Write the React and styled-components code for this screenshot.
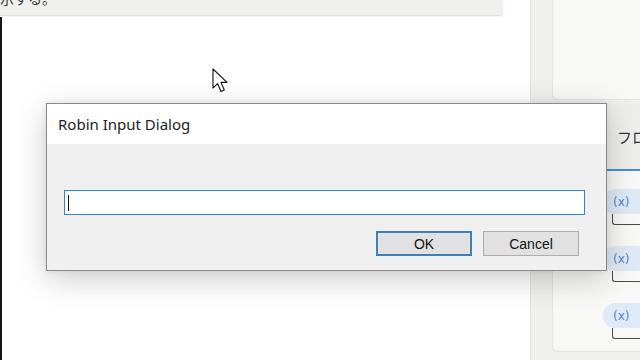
import styled, { createGlobalStyle } from "styled-components";

const Global = createGlobalStyle`
  html, body { margin: 0; padding: 0; background: #ffffff; }
  body { font-family: "Noto Sans", "Noto Sans CJK JP", sans-serif; }
`;

const items = [0, 1, 2];

export default function App() {
  return (
    <>
      <Global />
      <Screen>
        <MainColumn>
          <TopPanel>
            <TopText>示する。</TopText>
          </TopPanel>
          <Canvas />
        </MainColumn>

        <SidePane>
          <UpperCard />
          <VarCard>
            <VarHeader>
              <VarTab>フロー変数</VarTab>
            </VarHeader>
            <VarList>
              {items.map((i) => (
                <VarItem key={i}>
                  <VarChip>(x)</VarChip>
                  <VarBox />
                </VarItem>
              ))}
            </VarList>
          </VarCard>
        </SidePane>

        <Cursor width="18" height="27" viewBox="0 0 18 27">
          <path
            d="M1 1 L1 20 L5.6 15.6 L9 23.5 L12.3 22 L9 14.4 L15 14.4 Z"
            fill="#ffffff"
            stroke="#111"
            strokeWidth="1.1"
            strokeLinejoin="round"
          />
        </Cursor>

        <Dialog>
          <TitleBar>Robin Input Dialog</TitleBar>
          <DialogBody>
            <TextBox>
              <Caret />
            </TextBox>
            <ButtonRow>
              <DlgButton primary>OK</DlgButton>
              <DlgButton>Cancel</DlgButton>
            </ButtonRow>
          </DialogBody>
        </Dialog>
      </Screen>
    </>
  );
}

const Screen = styled.div`
  position: relative;
  width: 640px;
  height: 360px;
  overflow: hidden;
  display: flex;
  background: #ffffff;
`;

const MainColumn = styled.div`
  width: 530px;
  flex-shrink: 0;
  display: flex;
  flex-direction: column;
  background: #ffffff;
`;

const TopPanel = styled.div`
  width: 503px;
  height: 15px;
  background: #f0f0ee;
  border-bottom: 1px solid #e2e2df;
  border-bottom-right-radius: 3px;
  box-shadow: 0 2px 4px rgba(0, 0, 0, 0.05);
  overflow: hidden;
  display: flex;
  align-items: flex-end;
`;

const TopText = styled.div`
  font-size: 14px;
  line-height: 14px;
  color: #3a3a3a;
  margin-bottom: 9px;
  white-space: nowrap;
`;

const Canvas = styled.div`
  flex: 1;
  margin-top: 1px;
  border-left: 2px solid #151515;
  background: #ffffff;
`;

const SidePane = styled.div`
  flex: 1;
  min-width: 0;
  display: flex;
  flex-direction: column;
  gap: 4px;
  padding-left: 21px;
  background: #efefed;
  border-left: 1px solid #e4e4e2;
`;

const UpperCard = styled.div`
  height: 99px;
  background: #f8f8f6;
  border-left: 1px solid #e2e2e0;
  border-bottom: 1px solid #e2e2e0;
  border-bottom-left-radius: 6px;
`;

const VarCard = styled.div`
  height: 247px;
  background: #f8f8f6;
  border-left: 1px solid #e2e2e0;
  border-bottom: 1px solid #e2e2e0;
  border-top-left-radius: 6px;
  border-bottom-left-radius: 6px;
  display: flex;
  flex-direction: column;
  overflow: hidden;
`;

const VarHeader = styled.div`
  height: 67px;
  padding-left: 54px;
  background: #ededec;
  display: flex;
  align-items: stretch;
`;

const VarTab = styled.div`
  flex: 1;
  min-width: 0;
  padding-left: 10px;
  display: flex;
  align-items: center;
  border-bottom: 2px solid #4a8fd3;
  font-size: 15px;
  color: #333;
  white-space: nowrap;
  overflow: hidden;
`;

const VarList = styled.div`
  display: flex;
  flex-direction: column;
  gap: 21px;
  padding: 18px 0 0 50px;
`;

const VarItem = styled.div`
  display: flex;
  flex-direction: column;
`;

const VarChip = styled.div`
  height: 25px;
  padding-left: 10px;
  display: flex;
  align-items: center;
  background: #dfeaf6;
  border-radius: 12px 0 0 12px;
  font-family: "DejaVu Sans", sans-serif;
  font-size: 12px;
  color: #4f88c6;
  white-space: nowrap;
`;

const VarBox = styled.div`
  height: 10px;
  margin-left: 9px;
  border-left: 1.5px solid #4a4a4a;
  border-bottom: 1.5px solid #4a4a4a;
  border-bottom-left-radius: 3px;
`;

const Cursor = styled.svg`
  position: absolute;
  left: 212px;
  top: 68px;
`;

const Dialog = styled.div`
  position: absolute;
  left: 46px;
  top: 103px;
  width: 559px;
  display: flex;
  flex-direction: column;
  border: 1px solid #8a8a8a;
  background: #f0f0f0;
  box-shadow: 0 8px 30px rgba(0, 0, 0, 0.2), 0 0 6px rgba(0, 0, 0, 0.08);
`;

const TitleBar = styled.div`
  height: 40px;
  padding-left: 11px;
  display: flex;
  align-items: center;
  background: #ffffff;
  font-family: "Noto Sans", sans-serif;
  font-size: 15px;
  color: #222;
`;

const DialogBody = styled.div`
  height: 126px;
  padding: 46px 21px 0 17px;
  box-sizing: border-box;
  display: flex;
  flex-direction: column;
  gap: 16px;
`;

const TextBox = styled.div`
  height: 25px;
  box-sizing: border-box;
  border: 1px solid #2f86cf;
  background: #ffffff;
  display: flex;
  align-items: center;
  padding-left: 3px;
`;

const Caret = styled.span`
  width: 1px;
  height: 16px;
  background: #111;
`;

const ButtonRow = styled.div`
  display: flex;
  justify-content: flex-end;
  gap: 11px;
  padding-right: 6px;
`;

const DlgButton = styled.div`
  width: 96px;
  height: 25px;
  box-sizing: border-box;
  display: flex;
  align-items: center;
  justify-content: center;
  background: #e1e1e1;
  border: ${({ primary }) => (primary ? "2px solid #3b7fbd" : "1px solid #adadad")};
  font-family: "Liberation Sans", Arial, sans-serif;
  font-size: 14px;
  color: #111;
`;
